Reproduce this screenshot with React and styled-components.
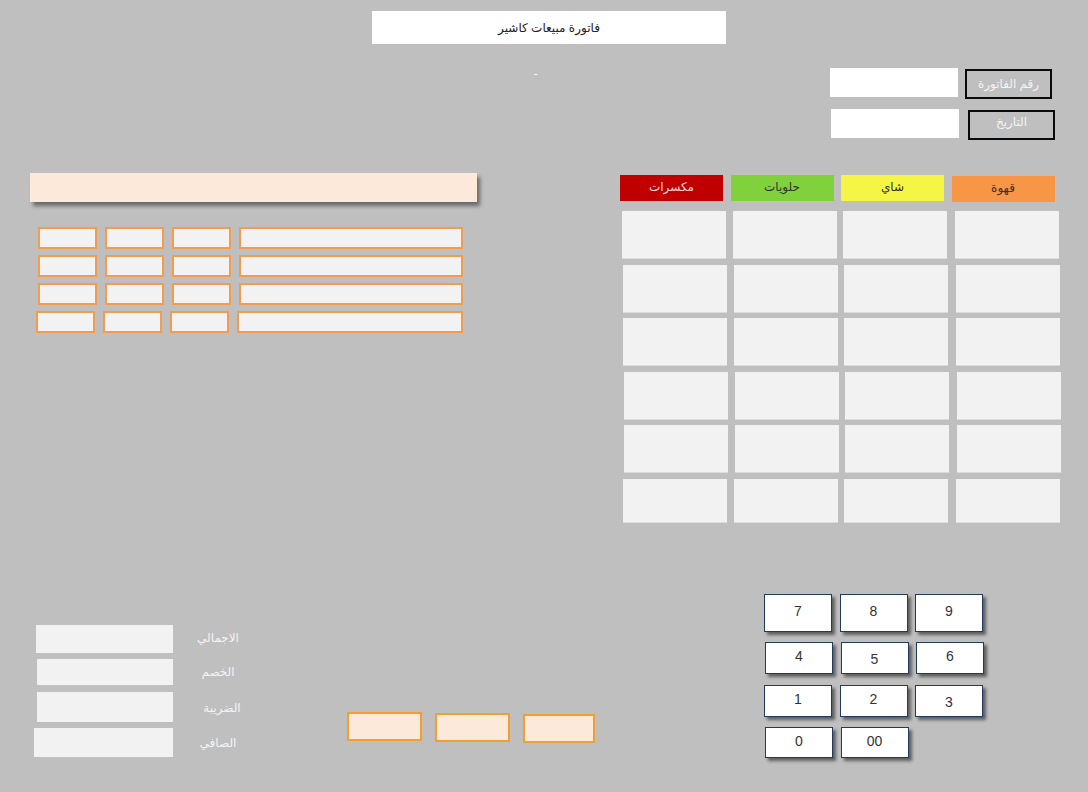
import React from "react";
import styled, { createGlobalStyle } from "styled-components";

const GlobalStyle = createGlobalStyle`
  html, body {
    margin: 0;
    padding: 0;
    background: #bfbfbf;
  }
  body {
    font-family: "Liberation Sans", "DejaVu Sans", sans-serif;
  }
`;

const Page = styled.div`
  width: 1088px;
  height: 792px;
  background: #bfbfbf;
  display: flex;
  flex-direction: column;
  overflow: hidden;
`;

const TitleRow = styled.div`
  display: flex;
  padding: 11px 0 0 372px;
`;

const Title = styled.div`
  width: 354px;
  height: 33px;
  background: #ffffff;
  display: flex;
  align-items: center;
  justify-content: center;
  font-size: 12px;
  color: #222;
`;

const MetaArea = styled.div`
  display: flex;
  padding-top: 24px;
`;

const Dash = styled.div`
  margin: 1px 0 0 534px;
  color: #ffffff;
  font-size: 11px;
  line-height: 8px;
  height: 8px;
`;

const MetaFields = styled.div`
  margin-left: auto;
  margin-right: 33px;
  display: flex;
  flex-direction: column;
  gap: 10px;
`;

const MetaRow = styled.div`
  display: flex;
  align-items: flex-start;
  gap: ${(p) => p.$gap}px;
  margin-left: ${(p) => p.$shift}px;
`;

const MetaInput = styled.div`
  width: 128px;
  height: 29px;
  background: #ffffff;
`;

const MetaLabel = styled.div`
  width: 87px;
  height: 30px;
  margin-top: 1px;
  box-sizing: border-box;
  border: 2px solid #0a0a0a;
  background: #bfbfbf;
  color: #f4f4f4;
  font-size: 12px;
  display: flex;
  align-items: center;
  justify-content: center;
  padding-bottom: ${(p) => p.$lift || 0}px;
`;

const Main = styled.div`
  display: flex;
  align-items: flex-start;
  padding-left: 30px;
  margin-top: 33px;
`;

const ItemsPanel = styled.div`
  width: 447px;
  display: flex;
  flex-direction: column;
`;

const ItemsHeader = styled.div`
  height: 29px;
  background: #fde9d9;
  box-shadow: 3px 4px 4px rgba(0, 0, 0, 0.45);
`;

const ItemRows = styled.div`
  margin-top: 25px;
  display: flex;
  flex-direction: column;
  gap: 5px;
`;

const ItemRow = styled.div`
  display: grid;
  grid-template-columns: 59px 59px 59px ${(p) => 224 + (8 - p.$shift)}px;
  column-gap: 8px;
  margin-left: ${(p) => p.$shift}px;
  margin-top: ${(p) => p.$extra || 0}px;
`;

const ItemCell = styled.div`
  height: 22px;
  box-sizing: border-box;
  border: 2px solid #f19c50;
  background: #f2f2f2;
`;

const ProductsPanel = styled.div`
  margin-left: 143px;
  width: 442px;
  display: flex;
  flex-direction: column;
`;

const Tabs = styled.div`
  display: grid;
  grid-template-columns: repeat(4, 103px);
  column-gap: 7.5px;
  margin-top: 2px;
`;

const Tab = styled.div`
  height: 26px;
  background: ${(p) => p.$bg};
  color: ${(p) => p.$fg};
  font-size: 12px;
  display: flex;
  align-items: center;
  justify-content: center;
  margin-top: ${(p) => p.$drop || 0}px;
  padding-bottom: 3px;
  box-sizing: border-box;
`;

const ProductGrid = styled.div`
  margin: 9px 0 0 2px;
  display: grid;
  grid-template-columns: repeat(4, 104px);
  grid-template-rows: repeat(5, 48px) 44px;
  column-gap: 6.5px;
  row-gap: 5.5px;
`;

const ProductCell = styled.div`
  background: #f2f2f2;
  border-bottom: 1px solid #dcdcdc;
  transform: translateX(${(p) => p.$dx}px);
`;

const Bottom = styled.div`
  display: flex;
  align-items: flex-start;
  margin-top: 71px;
`;

const Summary = styled.div`
  margin: 31px 0 0 34px;
  display: grid;
  grid-template-columns: 139px 90px;
  grid-template-rows: 28px 26px 30px 29px;
  row-gap: 6.5px;
  align-items: center;
`;

const SummaryBox = styled.div`
  height: 100%;
  background: #f2f2f2;
  margin-left: ${(p) => p.$shift}px;
`;

const SummaryLabel = styled.div`
  color: #f4f4f4;
  font-size: 12px;
  text-align: center;
  margin-top: ${(p) => p.$dy}px;
  padding-left: ${(p) => p.$dx || 0}px;
`;

const ActionButtons = styled.div`
  margin: 118px 0 0 84px;
  display: flex;
  align-items: flex-start;
  gap: 13px;
`;

const ActionButton = styled.div`
  width: ${(p) => p.$w}px;
  height: 29px;
  box-sizing: border-box;
  border: 2px solid #f0a030;
  background: #fde9d9;
  margin-top: ${(p) => p.$dy}px;
`;

const Keypad = styled.div`
  margin-left: 169px;
  display: grid;
  grid-template-columns: repeat(3, 68px);
  grid-template-rows: 38px 32px 32px 31px;
  column-gap: 7.5px;
  row-gap: 10.5px;
`;

const Key = styled.div`
  box-sizing: border-box;
  border: 1.5px solid #243a5c;
  background: #ffffff;
  box-shadow: 3px 3px 3px rgba(0, 0, 0, 0.5);
  color: #333;
  font-size: 14px;
  display: flex;
  justify-content: center;
  align-items: ${(p) => (p.$low ? "flex-end" : "center")};
  padding-bottom: ${(p) => (p.$low ? 6 : 4)}px;
  transform: translateX(${(p) => p.$dx || 0}px);
`;

const tabs = [
  { label: "مكسرات", bg: "#c00000", fg: "#f2dcdb" },
  { label: "حلويات", bg: "#80d13c", fg: "#333" },
  { label: "شاي", bg: "#f5f545", fg: "#333" },
  { label: "قهوة", bg: "#f79646", fg: "#333", drop: 1 },
];

const rowShifts = [0, 1, 1, 2, 2, 1];

const summary = [
  { label: "الاجمالي", shift: 2, dy: -2 },
  { label: "الخصم", shift: 3, dy: 0 },
  { label: "الضريبة", shift: 3, dy: 3, dx: 8 },
  { label: "الصافي", shift: 0, dy: 0 },
];

const keys = [
  { k: "7" }, { k: "8" }, { k: "9" },
  { k: "4", dx: 1 }, { k: "5", dx: 1, low: true }, { k: "6", dx: 1 },
  { k: "1" }, { k: "2" }, { k: "3", low: true },
  { k: "0", dx: 1 }, { k: "00", dx: 1 },
];

export default function App() {
  return (
    <Page>
      <GlobalStyle />
      <TitleRow>
        <Title>فاتورة مبيعات كاشير</Title>
      </TitleRow>

      <MetaArea>
        <Dash>-</Dash>
        <MetaFields>
          <MetaRow $gap={7} $shift={0}>
            <MetaInput />
            <MetaLabel>رقم الفاتورة</MetaLabel>
          </MetaRow>
          <MetaRow $gap={9} $shift={1}>
            <MetaInput />
            <MetaLabel $lift={6}>التاريخ</MetaLabel>
          </MetaRow>
        </MetaFields>
      </MetaArea>

      <Main>
        <ItemsPanel>
          <ItemsHeader />
          <ItemRows>
            {[8, 8, 8, 6].map((shift, i) => (
              <ItemRow key={i} $shift={shift} $extra={i > 0 ? 1 : 0}>
                <ItemCell />
                <ItemCell />
                <ItemCell />
                <ItemCell />
              </ItemRow>
            ))}
          </ItemRows>
        </ItemsPanel>

        <ProductsPanel>
          <Tabs>
            {tabs.map((t) => (
              <Tab key={t.label} $bg={t.bg} $fg={t.fg} $drop={t.drop}>
                {t.label}
              </Tab>
            ))}
          </Tabs>
          <ProductGrid>
            {rowShifts.map((dx, r) =>
              [0, 1, 2, 3].map((c) => (
                <ProductCell key={`${r}-${c}`} $dx={dx + (c === 3 ? 1 : 0)} />
              ))
            )}
          </ProductGrid>
        </ProductsPanel>
      </Main>

      <Bottom>
        <Summary>
          {summary.map((s) => (
            <React.Fragment key={s.label}>
              <SummaryBox $shift={s.shift} />
              <SummaryLabel $dy={s.dy} $dx={s.dx}>
                {s.label}
              </SummaryLabel>
            </React.Fragment>
          ))}
        </Summary>

        <ActionButtons>
          <ActionButton $w={75} $dy={0} />
          <ActionButton $w={75} $dy={1} />
          <ActionButton $w={72} $dy={2} />
        </ActionButtons>

        <Keypad>
          {keys.map((key) => (
            <Key key={key.k} $dx={key.dx} $low={key.low}>
              {key.k}
            </Key>
          ))}
        </Keypad>
      </Bottom>
    </Page>
  );
}
